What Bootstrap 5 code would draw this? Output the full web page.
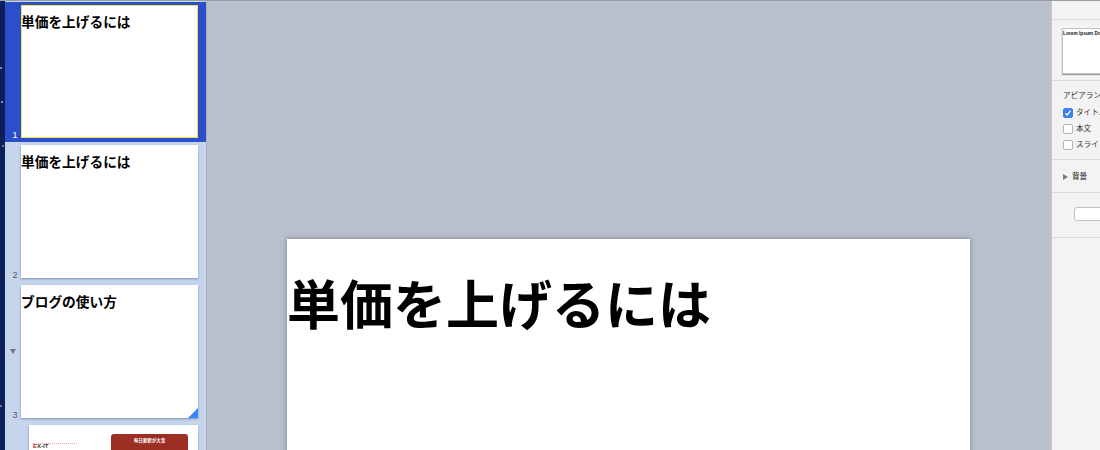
<!DOCTYPE html>
<html lang="ja">
<head>
<meta charset="utf-8">
<title>スライド</title>
<link href="https://cdn.jsdelivr.net/npm/bootstrap@5.3.0/dist/css/bootstrap.min.css" rel="stylesheet">
<style>
html,body{height:450px;overflow:hidden;margin:0}
body{font-family:"Liberation Sans","Noto Sans CJK JP",sans-serif;background:#b9bfcc;color:#000}
.app-shell{height:450px;width:1100px;border-top:1px solid #9a9da3;overflow:hidden}
.desk-strip{width:5px;flex:none;background-color:#0c1f58;background-image:radial-gradient(circle at 1px 67px,#7f8db0 0 1px,transparent 1px),radial-gradient(circle at 2px 101px,#7f8db0 0 1px,transparent 1px),radial-gradient(circle at 3px 145px,#6f7da3 0 1px,transparent 1px),radial-gradient(circle at 1px 405px,#6f7da3 0 1px,transparent 1px)}
.slide-rail{width:201px;flex:none;background:#c5d5ec;padding-top:1px;overflow:hidden;border-right:1px solid #aab0bd;box-sizing:content-box}
.rail-row{height:140px;padding:3px 8px 0 16px;position:relative}
.rail-row.is-current{background:#2b4fcb;margin-bottom:3px}
.rail-row.is-plain{height:140px;padding-top:0}
.rail-row.is-child{padding-left:24px;padding-top:0}
.rail-num{position:absolute;left:0;width:20px;bottom:3px;font-size:9px;line-height:10px;text-align:center;color:#555d6c}
.is-current .rail-num{color:#fff;bottom:2px}
.plain-num{bottom:5px}
.rail-tri{position:absolute;left:5px;top:64px;width:0;height:0;border-left:3px solid transparent;border-right:3px solid transparent;border-top:5px solid #6d7480}
.thumb{width:177px;height:133px;background:#fff;box-shadow:0 1px 2px rgba(70,85,115,.55);position:relative;overflow:hidden}
.is-current .thumb{border:1px solid #f6e04a;box-shadow:none}
.thumb-title{font-size:13.7px;font-weight:700;line-height:20px;padding-top:8px;white-space:nowrap}
.is-current .thumb-title{margin:-1px 0 0 -1px}
.corner-mark{position:absolute;right:0;bottom:0;width:0;height:0;border-left:10px solid transparent;border-bottom:10px solid #3a85f5}
.mini-thumb{width:169px;height:40px;background:#fff;box-shadow:0 1px 2px rgba(70,85,115,.55);position:relative}
.mini-line{position:absolute;left:4px;top:18px;width:44px;border-top:1px dotted #eaa0ae}
.mini-logo{position:absolute;left:4px;top:17px;font-size:6px;line-height:8px;font-weight:700;color:#333}
.mini-logo span{color:#b3261e}
.mini-btn{position:absolute;left:82px;top:9px;width:77px;height:31px;background:#9b2f23;border-radius:3px;color:#fff;font-size:4.5px;font-weight:700;text-align:center;line-height:14px}
.stage{flex:1 1 auto;padding-top:238px;padding-left:80px;min-width:0;overflow:hidden}
.big-slide{width:683px;height:300px;background:#fff;box-shadow:0 0 5px rgba(70,75,90,.55)}
.big-title{font-size:53px;font-weight:700;line-height:76px;padding-top:30px;white-space:nowrap}
.inspector{width:49px;flex:none;background:#f3f3f3;border-left:1px solid #c9c9cb;overflow:hidden;font-size:7.6px;color:#333;white-space:nowrap}
.insp-head{height:19px;background:#f3f3f3;border-bottom:1px solid #dcdcdc}
.insp-layout{height:61px;border-bottom:1px solid #dcdcdc;padding:8px 0 0 10px;position:relative}
.layout-thumb{width:60px;height:46px;background:#fff;border:1px solid #c4c4c4;border-right:0;box-shadow:0 1px 1px rgba(0,0,0,.35);font-size:4.8px;font-weight:700;line-height:8px;padding-top:1px;color:#111;overflow:hidden;white-space:nowrap}
.insp-appear{height:79px;border-bottom:1px solid #dcdcdc;padding:8px 0 0 11px;position:relative}
.appear-label{font-size:7.6px;line-height:14px;height:16px;width:60px;overflow:hidden}
.tick-row{height:16px;gap:3px;width:70px}
.tick-box{width:10px;height:10px;flex:none;border:1px solid #b5b5b5;border-radius:2px;background:#fff}
.tick-box.is-on{background:#3b82ea;border-color:#3b82ea;display:flex;align-items:center;justify-content:center}
.insp-bg{height:33px;border-bottom:1px solid #dcdcdc;padding:1px 0 0 11px;gap:4px;font-size:7.6px;font-weight:700;color:#555}
.bg-tri{width:0;height:0;border-top:3.5px solid transparent;border-bottom:3.5px solid transparent;border-left:5px solid #7a7a7a}
.insp-btn-wrap{height:45px;padding:14px 0 0 22px;border-bottom:1px solid #dcdcdc}
.insp-btn{width:60px;height:14px;background:#fff;border:1px solid #c0c0c0;border-radius:3px}
</style>
</head>
<body>
<div class="app-shell d-flex">
  <div class="desk-strip"></div>
  <div class="slide-rail">
    <div class="rail-row is-current">
      <div class="thumb"><div class="thumb-title">単価を上げるには</div></div>
      <div class="rail-num">1</div>
    </div>
    <div class="rail-row is-plain">
      <div class="thumb"><div class="thumb-title">単価を上げるには</div></div>
      <div class="rail-num plain-num">2</div>
    </div>
    <div class="rail-row is-plain">
      <div class="thumb"><div class="thumb-title">ブログの使い方</div><div class="corner-mark"></div></div>
      <div class="rail-num plain-num">3</div>
      <div class="rail-tri"></div>
    </div>
    <div class="rail-row is-child">
      <div class="mini-thumb">
        <div class="mini-line"></div>
        <div class="mini-logo"><span>E</span>X-IT</div>
        <div class="mini-btn">毎日更新が大事</div>
      </div>
    </div>
  </div>
  <div class="stage">
    <div class="big-slide"><div class="big-title">単価を上げるには</div></div>
  </div>
  <div class="inspector">
    <div class="insp-head"></div>
    <div class="insp-layout"><div class="layout-thumb">Lorem Ipsum Dolor</div></div>
    <div class="insp-appear">
      <div class="appear-label">アピアランス</div>
      <div class="tick-row d-flex align-items-center"><span class="tick-box is-on"><svg width="8" height="8" viewBox="0 0 8 8"><path d="M1.5 4.2 3.2 6 6.6 1.6" fill="none" stroke="#fff" stroke-width="1.3"/></svg></span><span>タイトル</span></div>
      <div class="tick-row d-flex align-items-center"><span class="tick-box"></span><span>本文</span></div>
      <div class="tick-row d-flex align-items-center"><span class="tick-box"></span><span>スライド番号</span></div>
    </div>
    <div class="insp-bg d-flex align-items-center"><span class="bg-tri"></span><span>背景</span></div>
    <div class="insp-btn-wrap"><div class="insp-btn"></div></div>
  </div>
</div>
<script src="https://cdn.jsdelivr.net/npm/bootstrap@5.3.0/dist/js/bootstrap.bundle.min.js"></script>
</body>
</html>
